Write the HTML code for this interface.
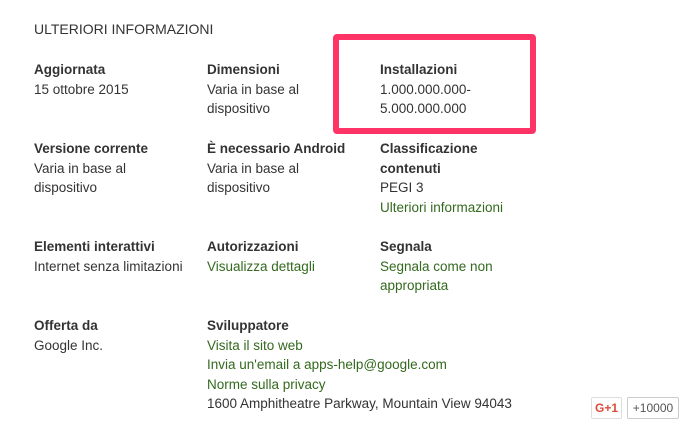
<!DOCTYPE html><html><head><style>
body{margin:0;width:699px;height:441px;background:#fff;font-family:"Liberation Sans",sans-serif;color:#333;position:relative;overflow:hidden}
.a{position:absolute;font-size:13.5px;line-height:19.5px;white-space:nowrap}
.b{font-weight:bold;color:#333}
.g{color:#33691e}
.h{position:absolute;left:34px;top:21px;font-size:14px;color:#333}
.box{position:absolute;left:333px;top:34px;width:191px;height:88px;border:6px solid #ff3366;border-radius:4px}
</style></head><body>
<div class="h">ULTERIORI INFORMAZIONI</div>
<div class="box"></div>
<div class="a" style="left:34px;top:60px"><span class="b">Aggiornata</span><br>15 ottobre 2015</div>
<div class="a" style="left:207px;top:60px"><span class="b">Dimensioni</span><br>Varia in base al<br>dispositivo</div>
<div class="a" style="left:380px;top:60px"><span class="b">Installazioni</span><br>1.000.000.000-<br>5.000.000.000</div>
<div class="a" style="left:34px;top:139px"><span class="b">Versione corrente</span><br>Varia in base al<br>dispositivo</div>
<div class="a" style="left:207px;top:139px"><span class="b">È necessario Android</span><br>Varia in base al<br>dispositivo</div>
<div class="a" style="left:380px;top:139px"><span class="b">Classificazione<br>contenuti</span><br>PEGI 3<br><span class="g">Ulteriori informazioni</span></div>
<div class="a" style="left:34px;top:237px"><span class="b">Elementi interattivi</span><br>Internet senza limitazioni</div>
<div class="a" style="left:207px;top:237px"><span class="b">Autorizzazioni</span><br><span class="g">Visualizza dettagli</span></div>
<div class="a" style="left:380px;top:237px"><span class="b">Segnala</span><br><span class="g">Segnala come non<br>appropriata</span></div>
<div class="a" style="left:34px;top:316px"><span class="b">Offerta da</span><br>Google Inc.</div>
<div class="a" style="left:207px;top:316px"><span class="b">Sviluppatore</span><br><span class="g">Visita il sito web<br>Invia un'email a apps-help@google.com<br>Norme sulla privacy</span><br>1600 Amphitheatre Parkway, Mountain View 94043</div>
<div style="position:absolute;left:591px;top:397px;width:29px;height:20px;border:1px solid #ddd;border-radius:2px;color:#dd4b39;font-weight:bold;font-size:12px;line-height:20px;text-align:center">G+1</div>
<div style="position:absolute;left:627px;top:397px;width:50px;height:20px;border:1px solid #ccc;border-radius:2px;color:#555;font-size:12px;line-height:20px;text-align:center">+10000</div>
</body></html>
